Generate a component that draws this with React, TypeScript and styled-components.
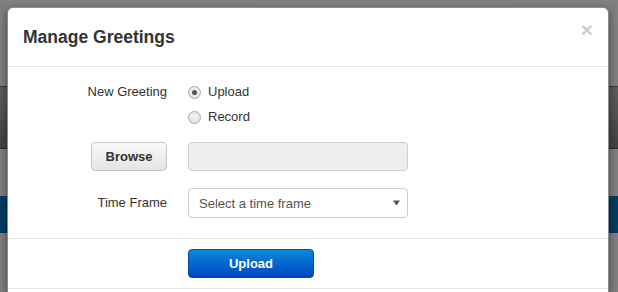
import React from "react";
import styled, { createGlobalStyle } from "styled-components";

const GlobalStyle = createGlobalStyle`
  html, body { margin: 0; padding: 0; }
  body {
    width: 618px;
    height: 292px;
    overflow: hidden;
    font-family: "Liberation Sans", Arial, sans-serif;
    font-size: 13px;
    color: #333;
    background: #808080;
  }
  * { box-sizing: border-box; }
`;

const Backdrop = styled.div`
  position: relative;
  height: 292px;
  overflow: hidden;
  background: #808080;
  display: flex;
  flex-direction: column;
`;

const Spacer = styled.div<{ $h: number }>`
  height: ${(p) => p.$h}px;
  flex: none;
`;

const DarkBand = styled.div`
  height: 63px;
  flex: none;
  border-top: 1px solid #3c3c3c;
  border-bottom: 1px solid #2e2e2e;
  background: linear-gradient(#5e5e5e, #424242);
`;

const BlueBand = styled.div`
  height: 37px;
  flex: none;
  background: #023c61;
`;

const Modal = styled.div`
  position: absolute;
  left: 7px;
  top: 7px;
  width: 602px;
  height: 285px;
  background: #fff;
  border: 1px solid rgba(0, 0, 0, 0.45);
  border-bottom: 0;
  border-radius: 6px 6px 0 0;
  box-shadow: 0 3px 9px rgba(0, 0, 0, 0.5);
  display: flex;
  flex-direction: column;
`;

const Header = styled.div`
  height: 59px;
  padding: 16px 15px 0 15px;
  border-bottom: 1px solid #e5e5e5;
  display: flex;
  justify-content: space-between;
  align-items: flex-start;
`;

const Title = styled.h4`
  margin: 0;
  font-size: 17.5px;
  line-height: 26px;
  font-weight: bold;
  color: #333;
`;

const Close = styled.button`
  margin-top: -5px;
  padding: 0;
  border: 0;
  background: transparent;
  font-family: "Liberation Sans", Arial, sans-serif;
  font-size: 21px;
  line-height: 21px;
  font-weight: bold;
  color: #000;
  opacity: 0.2;
  cursor: pointer;
`;

const Body = styled.div`
  padding: 15px 0 20px 0;
  display: grid;
  grid-template-columns: 159px 220px;
  column-gap: 21px;
  align-items: center;
`;

const Label = styled.div<{ $top?: boolean }>`
  justify-self: end;
  align-self: ${(p) => (p.$top ? "start" : "center")};
  line-height: 20px;
  color: #333;
`;

const RadioGroup = styled.div`
  display: flex;
  flex-direction: column;
  gap: 5px;
`;

const RadioRow = styled.label`
  display: flex;
  align-items: center;
  gap: 7px;
  height: 20px;
  line-height: 20px;
  color: #333;
`;

const RadioCircle = styled.span<{ $checked?: boolean }>`
  width: 13px;
  height: 13px;
  border-radius: 50%;
  border: 1px solid #a9a9a9;
  background: radial-gradient(circle at 50% 40%, #f4f4f4, #dcdcdc);
  display: flex;
  align-items: center;
  justify-content: center;
  margin-top: 1px;
  &::after {
    content: "";
    width: 5px;
    height: 5px;
    border-radius: 50%;
    background: #555;
    display: ${(p) => (p.$checked ? "block" : "none")};
  }
`;

const RowGap = styled.div<{ $h: number }>`
  grid-column: 1 / -1;
  height: ${(p) => p.$h}px;
`;

const BrowseButton = styled.button`
  justify-self: end;
  width: 76px;
  height: 29px;
  padding: 0;
  border: 1px solid #c6c6c6;
  border-radius: 4px;
  background: linear-gradient(#f9f9f9, #e4e4e4);
  font-family: "Liberation Sans", Arial, sans-serif;
  font-size: 13px;
  font-weight: bold;
  color: #333;
`;

const FileField = styled.div`
  height: 29px;
  border: 1px solid #cfcfcf;
  border-radius: 4px;
  background: #eee;
`;

const Select = styled.div`
  height: 30px;
  border: 1px solid #ccc;
  border-radius: 4px;
  background: #fff;
  display: flex;
  align-items: center;
  justify-content: space-between;
  padding: 0 7px 0 10px;
  color: #555;
`;

const Caret = styled.svg`
  width: 7px;
  height: 6px;
  display: block;
`;

const Footer = styled.div`
  border-top: 1px solid #e5e5e5;
  border-bottom: 1px solid #e5e5e5;
  padding: 10px 0 10px 180px;
  display: flex;
`;

const PrimaryButton = styled.button`
  width: 126px;
  height: 29px;
  padding: 0;
  border: 1px solid #0346b0;
  border-radius: 4px;
  background: linear-gradient(#0b88dc, #0046c2);
  font-family: "Liberation Sans", Arial, sans-serif;
  font-size: 13px;
  font-weight: bold;
  color: #fff;
`;

export default function App() {
  return (
    <>
      <GlobalStyle />
      <Backdrop>
        <Spacer $h={86} />
        <DarkBand />
        <Spacer $h={47} />
        <BlueBand />
        <Modal>
          <Header>
            <Title>Manage Greetings</Title>
            <Close aria-label="Close">×</Close>
          </Header>
          <Body>
            <Label $top>New Greeting</Label>
            <RadioGroup>
              <RadioRow>
                <RadioCircle $checked />
                Upload
              </RadioRow>
              <RadioRow>
                <RadioCircle />
                Record
              </RadioRow>
            </RadioGroup>
            <RowGap $h={15} />
            <BrowseButton>Browse</BrowseButton>
            <FileField />
            <RowGap $h={17} />
            <Label>Time Frame</Label>
            <Select>
              <span>Select a time frame</span>
              <Caret viewBox="0 0 7 6">
                <path d="M0 0.5 L7 0.5 L3.5 5.5 Z" fill="#555" />
              </Caret>
            </Select>
          </Body>
          <Footer>
            <PrimaryButton>Upload</PrimaryButton>
          </Footer>
        </Modal>
      </Backdrop>
    </>
  );
}
